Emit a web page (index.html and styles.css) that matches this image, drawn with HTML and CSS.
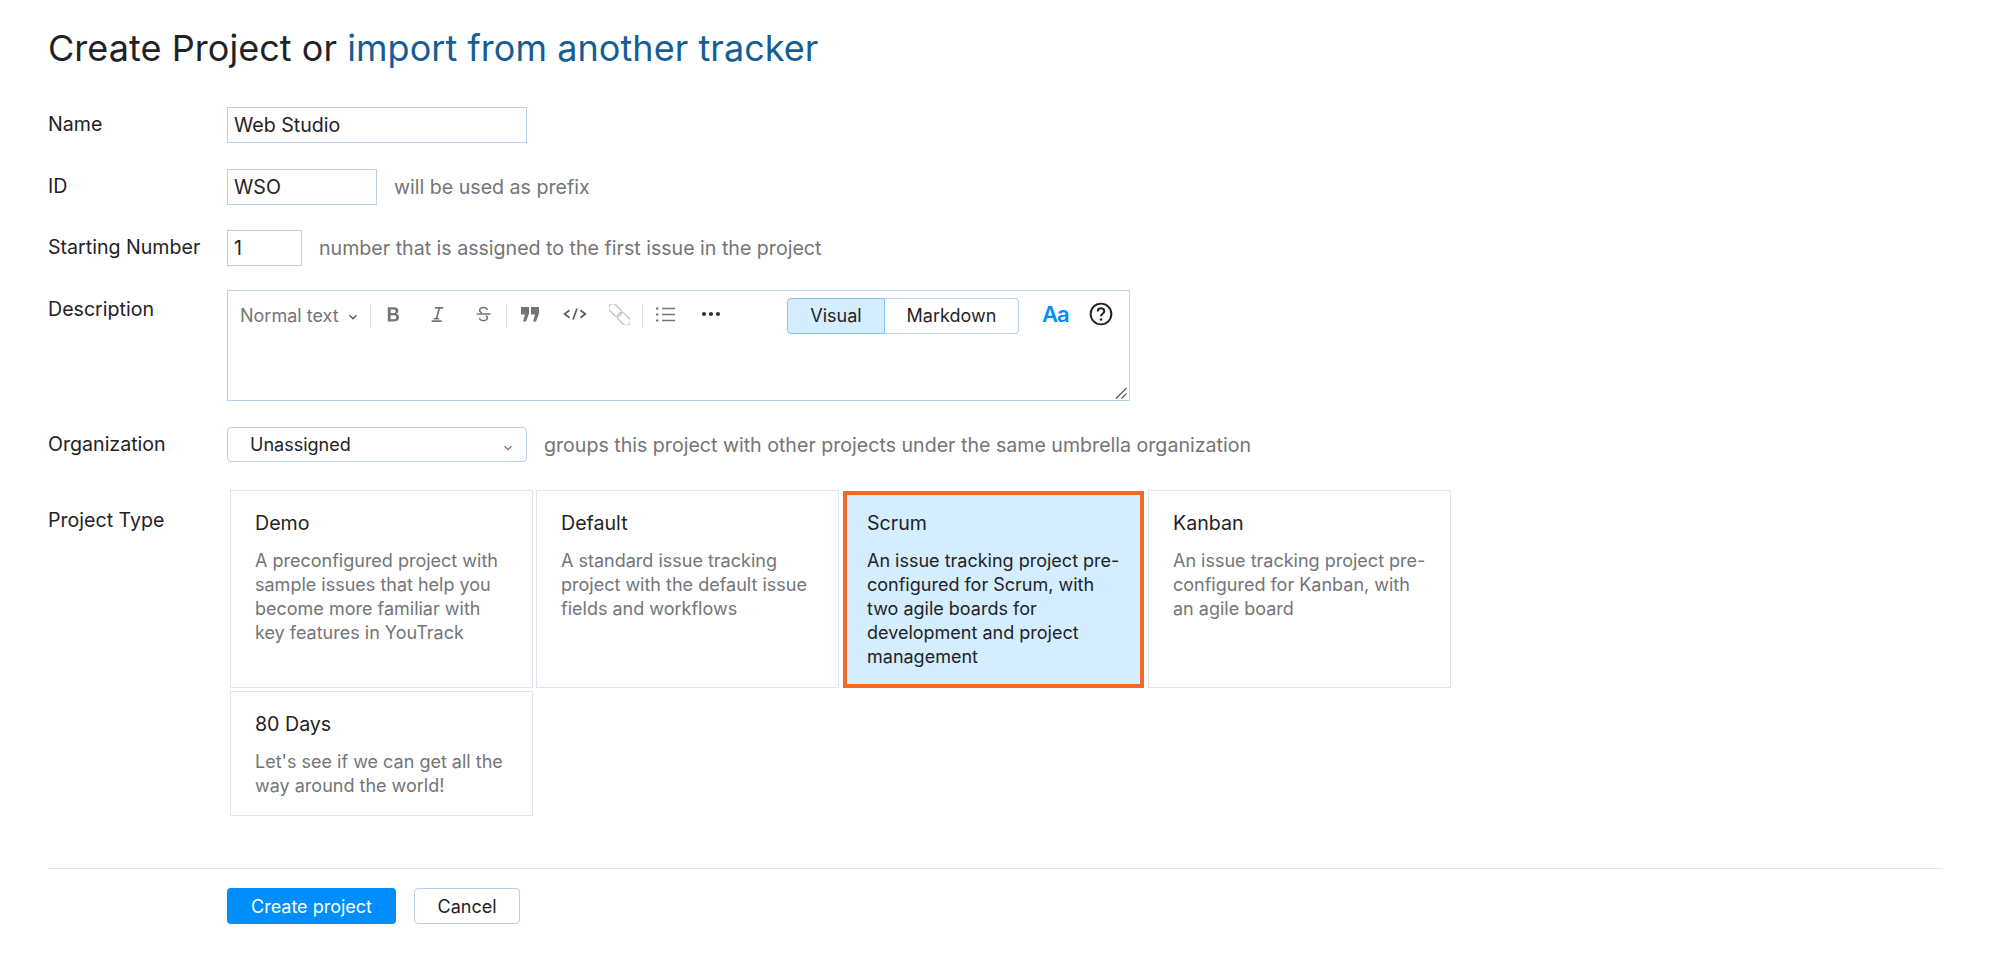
FILE: index.html
```html
<!DOCTYPE html>
<html lang="en">
<head>
    <meta charset="UTF-8">
    <title>Create Project</title>
    <link rel="stylesheet" href="styles.css">
</head>
<body>

    <div class="container">
        <h1>Create Project or <a href="#">import from another tracker</a></h1>

        <form id="createProjectForm">
            <div class="form-field field-name">
                <label for="name">Name</label>
                <input type="text" id="name" class="input-wide" value="Web Studio">
            </div>
            <div class="form-field field-id">
                <label for="projectId">ID</label>
                <input type="text" id="projectId" class="input-mid" value="WSO">
                <span class="hint">will be used as prefix</span>
            </div>
            <div class="form-field field-start">
                <label for="startNumber">Starting Number</label>
                <input type="text" id="startNumber" class="input-small" value="1">
                <span class="hint">number that is assigned to the first issue in the project</span>
            </div>

            <div class="form-field field-top field-desc">
                <label>Description</label>
                <div class="editor">
                    <div class="toolbar">
                        <span class="text-style">Normal text
                            <svg class="chevron" width="10" height="6" viewBox="0 0 10 6"><path d="M1.5 1.2 5 4.6l3.5-3.4" fill="none" stroke="#5c6064" stroke-width="1.5"/></svg>
                        </span>
                        <span class="sep"></span>
                        <button type="button" class="tool tool-narrow"><svg width="19" height="19" viewBox="0 0 16 16"><path d="M3.200 1.800h5.300c2.300 0 3.600 1.100 3.600 3 0 1.300-.7 2.200-1.800 2.600 1.400.3 2.400 1.300 2.400 2.900 0 2.100-1.500 3.500-4 3.500H3.200zm2.400 2v3h2.600c1.100 0 1.600-.6 1.600-1.500S9.300 3.800 8.200 3.800zm0 4.900v3.200h2.900c1.200 0 1.800-.6 1.800-1.600S9.700 8.700 8.500 8.700z" fill="#737577"/></svg></button>
                        <button type="button" class="tool"><svg width="17" height="17" viewBox="0 0 16 16"><path d="M5.500 1.800h8M9.800 1.800 7 12M2.500 14.200h9.500M4.500 12h5" fill="none" stroke="#737577" stroke-width="1.600"/></svg></button>
                        <button type="button" class="tool tool-wide"><svg width="17" height="17" viewBox="0 0 16 16"><path d="M11.800 3.600C11.300 2.200 9.900 1.300 8 1.300c-2.100 0-3.600 1.100-3.600 2.700 0 1.200.7 2 2.200 2.400M1.500 7.500h13M10.500 9c.8.500 1.200 1.100 1.200 1.900 0 1.700-1.600 2.900-3.700 2.900-2 0-3.500-.9-4-2.400" fill="none" stroke="#737577" stroke-width="1.400"/></svg></button>
                        <span class="sep"></span>
                        <button type="button" class="tool"><svg width="20" height="16" viewBox="0 0 20 16"><path d="M1 1h8v6.500L6 15.500H3l2-7H1zM11 1h8v6.500l-3 8h-3l2-7h-4z" fill="#737577"/></svg></button>
                        <button type="button" class="tool"><svg width="24" height="14" viewBox="0 0 24 14"><path d="M6.500 3.200 1.700 7l4.800 3.800M17.500 3.200 22.300 7l-4.800 3.800M14 1.500 10 12.500" fill="none" stroke="#5c6064" stroke-width="1.800"/></svg></button>
                        <button type="button" class="tool"><svg width="21" height="21" viewBox="0 0 20 20"><g fill="none" stroke="#c6c8ca" stroke-width="1.500" transform="rotate(45 10 10)"><rect x="-3" y="6" width="14" height="8" rx="4"/><rect x="9" y="6" width="14" height="8" rx="4"/></g></svg></button>
                        <span class="sep"></span>
                        <button type="button" class="tool"><svg width="19" height="15" viewBox="0 0 19 15"><path d="M6 1.500h13M6 7.500h13M6 13.500h13" stroke="#737577" stroke-width="1.300"/><path d="M0 .5h2.400v2H0zM0 6.500h2.400v2H0zM0 12.500h2.400v2H0z" fill="#737577"/></svg></button>
                        <button type="button" class="tool"><svg width="20" height="6" viewBox="0 0 20 6"><circle cx="3" cy="3" r="2.100" fill="#333"/><circle cx="10" cy="3" r="2.100" fill="#333"/><circle cx="17" cy="3" r="2.100" fill="#333"/></svg></button>

                        <div class="mode-switch">
                            <button type="button" class="mode active">Visual</button>
                            <button type="button" class="mode">Markdown</button>
                        </div>
                        <span class="aa">Aa</span>
                        <svg class="help" width="24" height="24" viewBox="0 0 22 22"><circle cx="11" cy="11" r="9.500" fill="none" stroke="#1f2326" stroke-width="1.800"/><path d="M8 8.700c0-1.800 1.300-2.900 3-2.900s3 1.100 3 2.600c0 2.300-3 2.300-3 4.600" fill="none" stroke="#1f2326" stroke-width="1.800"/><circle cx="11" cy="16" r="1.200" fill="#1f2326"/></svg>
                    </div>
                    <svg class="grip" width="12" height="12" viewBox="0 0 12 12"><path d="M1 11.500 11.500 1M6.500 11.500l5-5" stroke="#555" stroke-width="1.100"/></svg>
                </div>
            </div>

            <div class="form-field field-org">
                <label>Organization</label>
                <button type="button" class="select">Unassigned
                    <svg width="10" height="6" viewBox="0 0 10 6"><path d="M1.500 1.200 5 4.600l3.500-3.400" fill="none" stroke="#737577" stroke-width="1.200"/></svg>
                </button>
                <span class="hint">groups this project with other projects under the same umbrella organization</span>
            </div>

            <div class="form-field field-top field-type">
                <label>Project Type</label>
                <div class="type-grid">
                    <div class="type-card">
                        <h3>Demo</h3>
                        <p>A preconfigured project with sample issues that help you become more familiar with key features in YouTrack</p>
                    </div>
                    <div class="type-card">
                        <h3>Default</h3>
                        <p>A standard issue tracking project with the default issue fields and workflows</p>
                    </div>
                    <div class="type-card selected">
                        <h3>Scrum</h3>
                        <p>An issue tracking project pre-configured for Scrum, with two agile boards for development and project management</p>
                    </div>
                    <div class="type-card">
                        <h3>Kanban</h3>
                        <p>An issue tracking project pre-configured for Kanban, with an agile board</p>
                    </div>
                    <div class="type-card short">
                        <h3>80 Days</h3>
                        <p>Let's see if we can get all the way around the world!</p>
                    </div>
                </div>
            </div>

            <div class="button-container">
                <button type="button" class="btn-primary">Create project</button>
                <button type="button" class="btn-cancel">Cancel</button>
            </div>
        </form>
    </div>

</body>
</html>
```

FILE: styles.css
```css
body {
    font-family: Inter, "Noto Sans", Arial, sans-serif;
    font-size: 19.6px;
    color: #1f2326;
    background-color: #ffffff;
    margin: 0;
    padding: 0;
}

.container {
    padding: 26px 46px 0 48px;
}

h1 {
    font-size: 36px;
    line-height: 44px;
    font-weight: 400;
    letter-spacing: 0.05px;
    margin: 0 0 37px 0;
}

h1 a {
    color: #165d96;
    text-decoration: none;
}

/* Form rows */
.form-field {
    display: flex;
    align-items: center;
}

.form-field label {
    flex: 0 0 179px;
    margin-bottom: 2px;
}

.field-top {
    align-items: flex-start;
}

.field-id { margin-top: 26px; }
.field-start { margin-top: 25px; }
.field-desc { margin-top: 24px; }
.field-org { margin-top: 26px; }
.field-type { margin-top: 28px; }

.field-desc label {
    margin-top: 7px;
}

.field-type label {
    margin-top: 18px;
}

input {
    font: inherit;
    color: inherit;
    height: 36px;
    padding: 0 6px;
    border: 1px solid #b8d1e5;
    border-radius: 0;
    box-sizing: border-box;
    outline: none;
}

.input-wide { width: 300px; }
.input-mid { width: 150px; }
.input-small { width: 75px; }

.hint {
    color: #737577;
    margin-left: 17px;
}

/* Description editor */
.editor {
    position: relative;
    width: 903px;
    height: 111px;
    border: 1px solid #b8d1e5;
    box-sizing: border-box;
}

.toolbar {
    display: flex;
    align-items: center;
    height: 48px;
    padding-top: 1px;
    padding-left: 12px;
    font-size: 18px;
    box-sizing: border-box;
}

.text-style {
    display: flex;
    align-items: center;
    gap: 9px;
    width: 130px;
    color: #737577;
}

.chevron {
    margin-top: 3px;
}

.sep {
    flex: 0 0 1px;
    height: 24px;
    background-color: #dfe5eb;
}

.tool {
    flex: 0 0 45px;
    display: flex;
    align-items: center;
    justify-content: center;
    height: 30px;
    margin-bottom: 3px;
    padding: 0;
    background: none;
    border: none;
}

.tool.tool-narrow { flex-basis: 44px; }
.tool.tool-wide { flex-basis: 46px; }

.mode-switch {
    display: flex;
    margin-left: 54px;
    height: 36px;
}

.mode {
    font: inherit;
    color: inherit;
    background-color: #ffffff;
    border: 1px solid #b8d1e5;
    border-left: none;
    border-radius: 0 4px 4px 0;
    padding: 0;
    width: 134px;
}

.mode.active {
    background-color: #d4edff;
    border: 1px solid #80c6ff;
    border-radius: 4px 0 0 4px;
    width: 98px;
}

.aa {
    font-size: 22px;
    font-weight: 600;
    letter-spacing: -1px;
    color: #008eff;
    margin-left: 23px;
    margin-bottom: 3px;
}

.help {
    margin-left: 20px;
    margin-bottom: 3px;
}

.grip {
    position: absolute;
    right: 2px;
    bottom: 1px;
}

.select {
    display: flex;
    align-items: center;
    justify-content: space-between;
    font-family: inherit;
    font-size: 18px;
    color: inherit;
    width: 300px;
    height: 35px;
    padding: 0 13px 0 22px;
    background-color: #ffffff;
    border: 1px solid #b8d1e5;
    border-radius: 4px;
    box-sizing: border-box;
}

.select svg {
    margin-top: 6px;
}

/* Project type cards */
.type-grid {
    display: grid;
    grid-template-columns: repeat(4, 303px);
    grid-auto-rows: auto;
    column-gap: 3px;
    row-gap: 3px;
    margin-left: 3px;
}

.type-card {
    height: 198px;
    padding: 20px 24px 0 24px;
    border: 1px solid #dfe5eb;
    box-sizing: border-box;
}

.type-card.short {
    height: 125px;
}

.type-card.selected {
    height: 197px;
    margin: 1px 1px 0 1px;
    background-color: #d4edff;
    border: 4px solid #f26a2a;
    padding: 16px 20px 0 20px;
}

.type-card h3 {
    font-size: 19.6px;
    line-height: 24px;
    font-weight: 400;
    margin: 0 0 14px 0;
}

.type-card p {
    font-size: 18px;
    line-height: 24px;
    color: #737577;
    margin: 0;
}

.type-card.selected p {
    color: #1f2326;
}

/* Footer buttons */
.button-container {
    display: flex;
    gap: 18px;
    margin-top: 52px;
    padding-top: 19px;
    padding-left: 179px;
    border-top: 1px solid #dfe5eb;
}

.button-container button {
    font-family: inherit;
    font-size: 18px;
    height: 36px;
    border-radius: 4px;
    box-sizing: border-box;
}

.btn-primary {
    width: 169px;
    color: #ffffff;
    background-color: #008eff;
    border: none;
}

.btn-cancel {
    width: 106px;
    color: #1f2326;
    background-color: #ffffff;
    border: 1px solid #b8d1e5;
}
```
